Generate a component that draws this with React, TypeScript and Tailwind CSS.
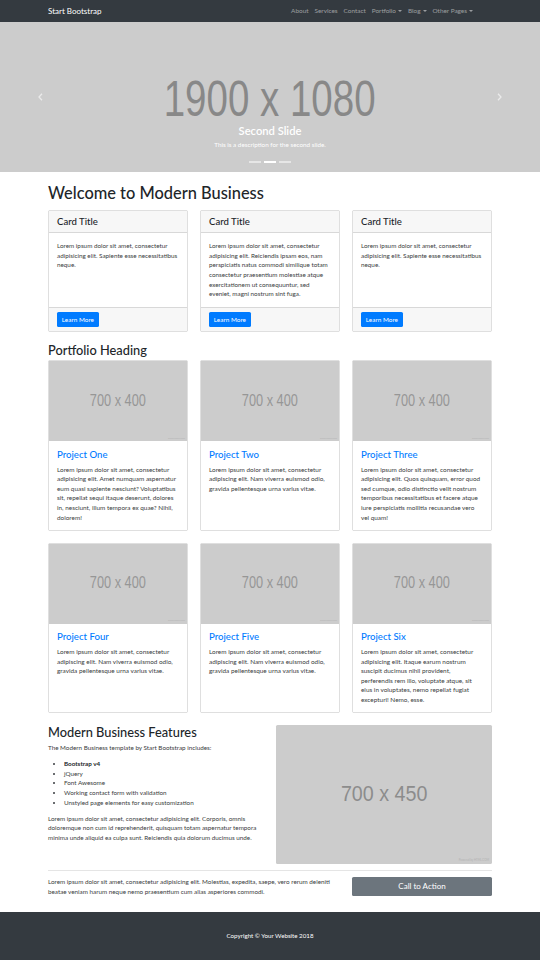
import React from "react";

const navLinks = [
  { label: "About" },
  { label: "Services" },
  { label: "Contact" },
  { label: "Portfolio", caret: true },
  { label: "Blog", caret: true },
  { label: "Other Pages", caret: true },
];

const cards = [
  "Lorem ipsum dolor sit amet, consectetur adipisicing elit. Sapiente esse necessitatibus neque.",
  "Lorem ipsum dolor sit amet, consectetur adipisicing elit. Reiciendis ipsam eos, nam perspiciatis natus commodi similique totam consectetur praesentium molestiae atque exercitationem ut consequuntur, sed eveniet, magni nostrum sint fuga.",
  "Lorem ipsum dolor sit amet, consectetur adipisicing elit. Sapiente esse necessitatibus neque.",
];

const short =
  "Lorem ipsum dolor sit amet, consectetur adipiscing elit. Nam viverra euismod odio, gravida pellentesque urna varius vitae.";

const projects = [
  {
    title: "Project One",
    text: "Lorem ipsum dolor sit amet, consectetur adipisicing elit. Amet numquam aspernatur eum quasi sapiente nesciunt? Voluptatibus sit, repellat sequi itaque deserunt, dolores in, nesciunt, illum tempora ex quae? Nihil, dolorem!",
  },
  { title: "Project Two", text: short },
  {
    title: "Project Three",
    text: "Lorem ipsum dolor sit amet, consectetur adipisicing elit. Quos quisquam, error quod sed cumque, odio distinctio velit nostrum temporibus necessitatibus et facere atque iure perspiciatis mollitia recusandae vero vel quam!",
  },
  { title: "Project Four", text: short },
  { title: "Project Five", text: short },
  {
    title: "Project Six",
    text: "Lorem ipsum dolor sit amet, consectetur adipisicing elit. Itaque earum nostrum suscipit ducimus nihil provident, perferendis rem illo, voluptate atque, sit eius in voluptates, nemo repellat fugiat excepturi! Nemo, esse.",
  },
];

const Chevron = ({ flip }: { flip?: boolean }) => (
  <svg width="5" height="8" viewBox="0 0 5 8" className={flip ? "rotate-180" : ""}>
    <path d="M4 0.8 L1 4 L4 7.2" fill="none" stroke="white" strokeOpacity="0.6" strokeWidth="1.3" />
  </svg>
);

export default function App() {
  return (
    <div className="w-[540px] min-h-[960px] bg-white font-['Lato','Liberation_Sans',sans-serif] text-[#3a3d40] text-[6.3px] leading-[9.6px]">
      {/* navbar */}
      <nav className="h-[22px] bg-[#343a40] flex items-center">
        <div className="w-[456px] mx-auto px-[6px] flex items-center justify-between">
          <span className="text-[8px] leading-[12px] text-white">Start Bootstrap</span>
          <ul className="flex mr-[16px] text-[6.4px] text-white/50">
            {navLinks.map((l) => (
              <li key={l.label} className="px-[3px]">
                {l.label}
                {l.caret && (
                  <span className="inline-block w-0 h-0 ml-[2px] align-[1.6px] border-x-[2px] border-x-transparent border-t-[2px] border-t-current" />
                )}
              </li>
            ))}
          </ul>
        </div>
      </nav>

      {/* carousel */}
      <header className="relative h-[150px] bg-[#cccccc] flex flex-col items-center">
        <div className="pt-[58px] text-[50px] leading-[38px] text-[#888888] font-['Liberation_Sans',Arial,sans-serif] scale-x-[0.77]">
          1900 x 1080
        </div>
        <h3 className="mt-[6px] text-[11.2px] leading-[13.4px] font-semibold text-white mb-[3px]">Second Slide</h3>
        <p className="text-white">This is a description for the second slide.</p>
        <div className="flex gap-[3px] mt-[11px]">
          <span className="w-[12px] h-[1.5px] bg-white/50" />
          <span className="w-[12px] h-[1.5px] bg-white" />
          <span className="w-[12px] h-[1.5px] bg-white/50" />
        </div>
        <div className="absolute left-[38px] top-[71px]">
          <Chevron />
        </div>
        <div className="absolute left-[497px] top-[71px]">
          <Chevron flip />
        </div>
      </header>

      <div className="w-[456px] mx-auto px-[6px]">
        <h1 className="mt-[10.5px] mb-[8.5px] text-[16.4px] leading-[19.2px] font-medium text-[#212529]">
          Welcome to Modern Business
        </h1>

        <div className="grid grid-cols-3 gap-x-[12px] mb-[11px]">
          {cards.map((t, i) => (
            <div key={i} className="flex flex-col border border-black/[.125] rounded-[1.6px]">
              <div className="bg-black/[.03] border-b border-black/[.125] px-[8px] py-[4.8px]">
                <h4 className="text-[9.6px] leading-[11.5px] font-medium text-[#212529]">Card Title</h4>
              </div>
              <div className="flex-1 p-[8px]">
                <p>{t}</p>
              </div>
              <div className="bg-black/[.03] border-t border-black/[.125] px-[8px] py-[4px]">
                <button className="h-[15.5px] px-[4.8px] rounded-[1.6px] bg-[#007bff] text-white text-[6.4px]">
                  Learn More
                </button>
              </div>
            </div>
          ))}
        </div>

        <h2 className="text-[12.8px] leading-[15.4px] font-medium mb-[1.5px] text-[#212529]">Portfolio Heading</h2>

        <div className="grid grid-cols-3 gap-x-[12px] gap-y-[12px] mb-[11.5px]">
          {projects.map((p) => (
            <div key={p.title} className="flex flex-col border border-black/[.125] rounded-[1.6px]">
              <div className="relative h-[80px] bg-[#cccccc] flex items-center justify-center">
                <span className="text-[16.8px] leading-none text-[#969696] font-['Liberation_Sans',Arial,sans-serif] scale-x-[0.76]">
                  700 x 400
                </span>
                <span className="absolute right-[2px] bottom-[1px] text-[2.4px] leading-none text-[#b3b3b3]">
                  placeholder.com
                </span>
              </div>
              <div className="flex-1 px-[8px] pt-[7.5px] pb-[7.5px]">
                <h4 className="text-[9.6px] leading-[11.5px] font-medium text-[#007bff] mb-[4.4px]">{p.title}</h4>
                <p className="text-[6.4px]">{p.text}</p>
              </div>
            </div>
          ))}
        </div>

        <div className="grid grid-cols-2 gap-x-[12px]">
          <div>
            <h2 className="text-[12.8px] leading-[15.4px] font-medium mb-[3.2px] text-[#212529]">
              Modern Business Features
            </h2>
            <p className="mb-[6.4px]">The Modern Business template by Start Bootstrap includes:</p>
            <ul className="list-disc pl-[16px] mb-[6.4px]">
              <li>
                <strong className="font-bold text-[#212529]">Bootstrap v4</strong>
              </li>
              <li>jQuery</li>
              <li>Font Awesome</li>
              <li>Working contact form with validation</li>
              <li>Unstyled page elements for easy customization</li>
            </ul>
            <p>
              Lorem ipsum dolor sit amet, consectetur adipisicing elit. Corporis, omnis doloremque non cum id
              reprehenderit, quisquam totam aspernatur tempora minima unde aliquid ea culpa sunt. Reiciendis quia
              dolorum ducimus unde.
            </p>
          </div>
          <div className="relative h-[139px] bg-[#cccccc] rounded-[1.6px] flex items-center justify-center">
            <span className="text-[22.4px] leading-none text-[#8c8c8c] font-['Liberation_Sans',Arial,sans-serif] scale-x-[0.88]">
              700 x 450
            </span>
            <span className="absolute right-[3px] bottom-[2px] text-[2.8px] leading-none text-[#b3b3b3]">
              Powered by HTML.COM
            </span>
          </div>
        </div>

        <hr className="mt-[6px] mb-[6.4px] border-black/10" />

        <div className="grid grid-cols-[292px_1fr] gap-x-[12px] mb-[16px]">
          <p>
            Lorem ipsum dolor sit amet, consectetur adipisicing elit. Molestias, expedita, saepe, vero rerum deleniti
            beatae veniam harum neque nemo praesentium cum alias asperiores commodi.
          </p>
          <button className="h-[19.2px] rounded-[1.6px] bg-[#6c757d] text-white text-[8px]">Call to Action</button>
        </div>
      </div>

      <footer className="h-[48px] bg-[#343a40] flex items-center justify-center text-white text-[6.2px]">
        Copyright © Your Website 2018
      </footer>
    </div>
  );
}
